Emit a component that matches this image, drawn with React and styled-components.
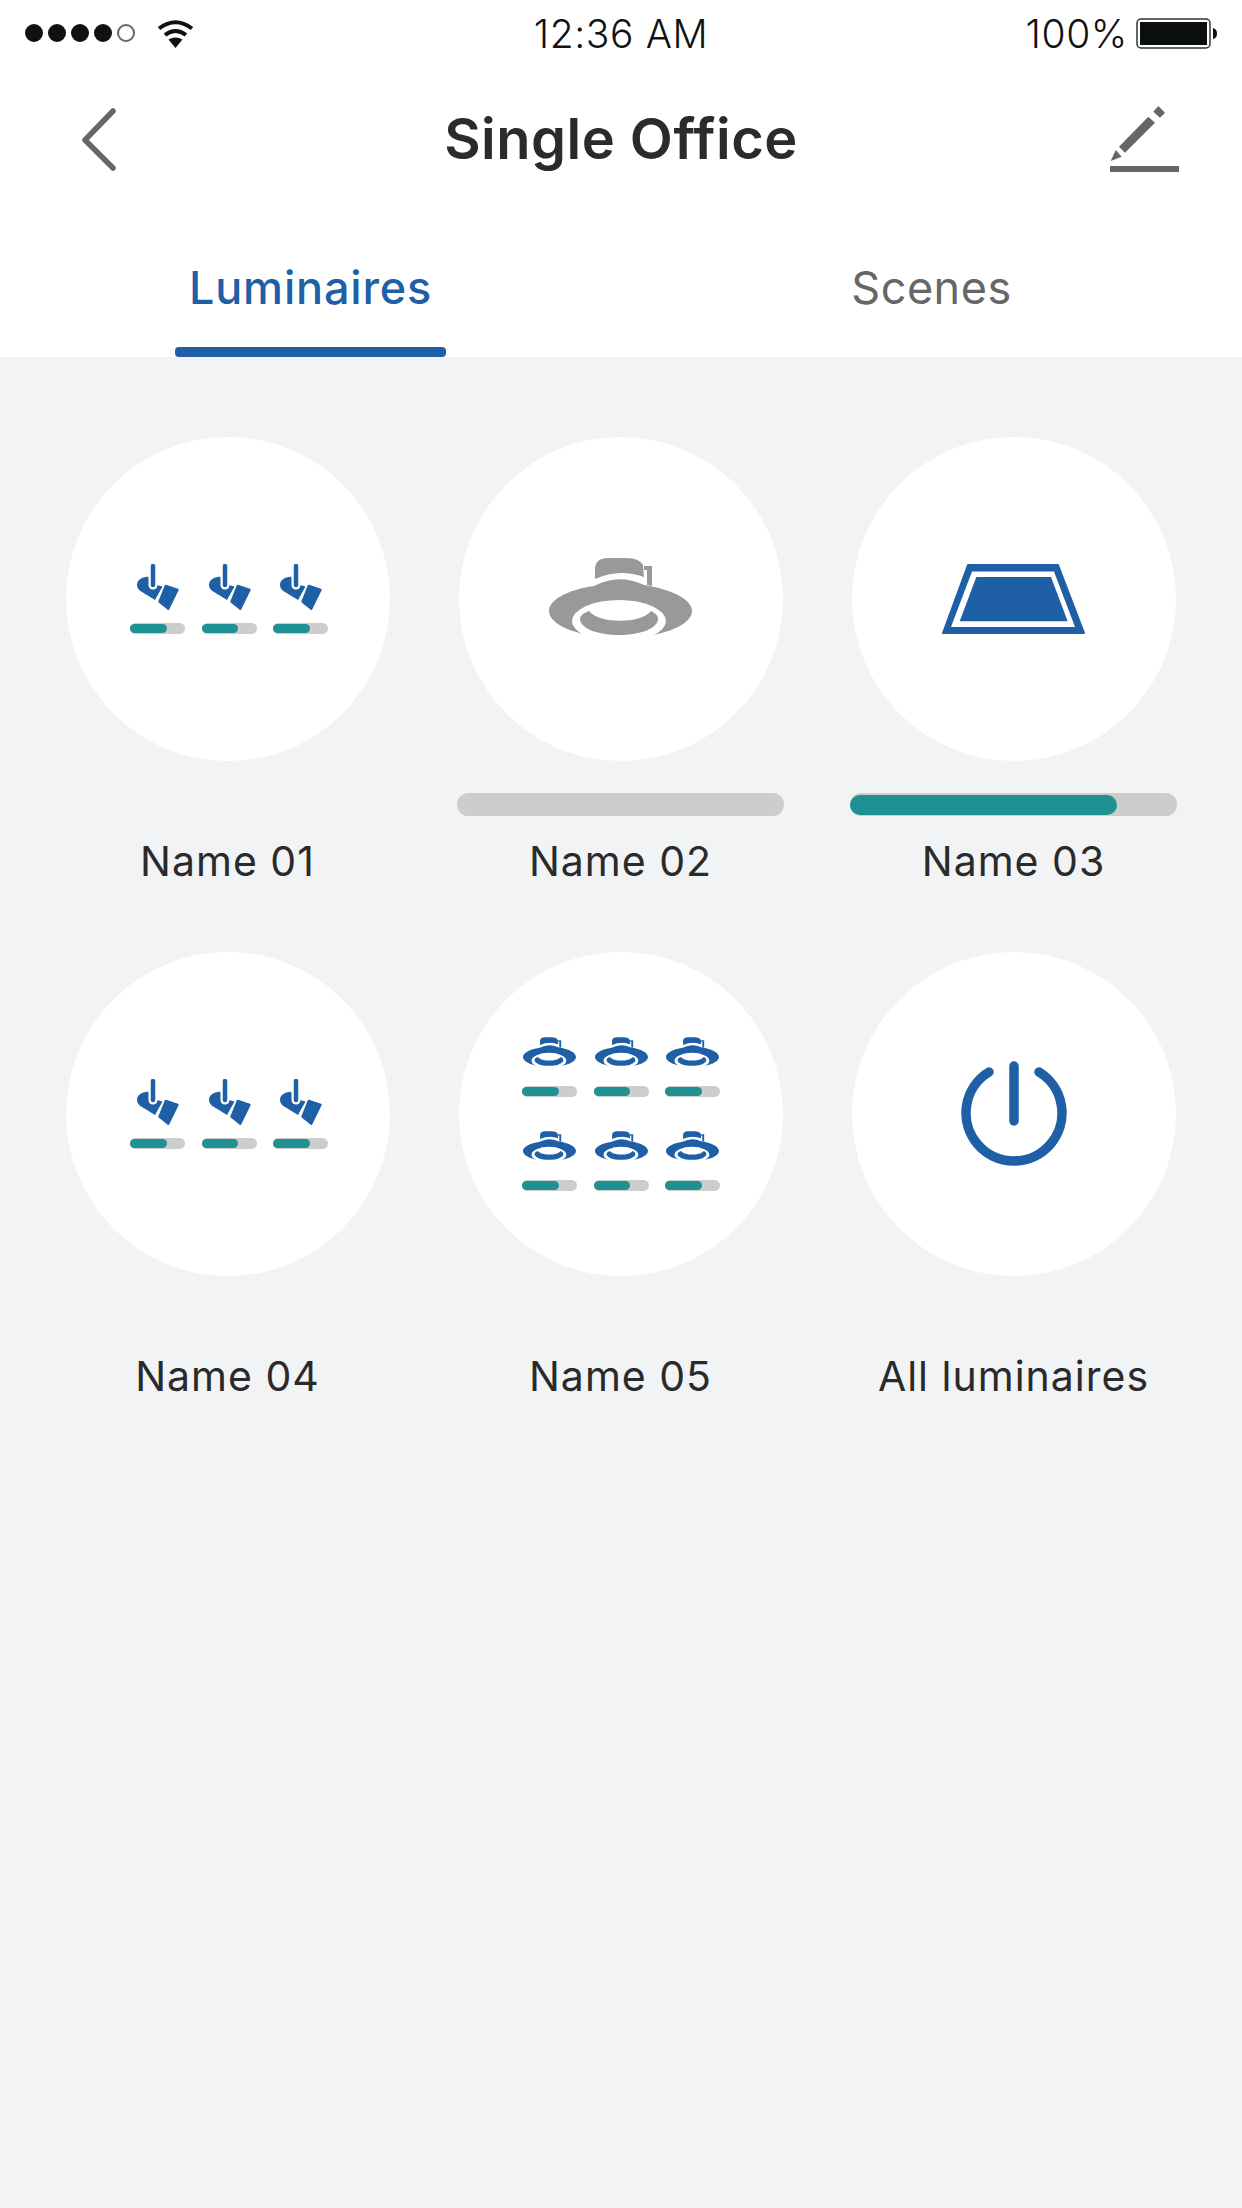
import React from 'react';
import styled, {createGlobalStyle} from 'styled-components';

const GlobalStyle = createGlobalStyle`
  html, body {
    margin: 0;
    padding: 0;
    background-color: #f2f3f5;
  }
`;

const BLUE = '#1f5fa6';
const TEAL = '#209193';
const GREY = '#cdcdcd';
const FONT = `Inter, Roboto, "Liberation Sans", sans-serif`;

const Page = styled.div`
  width: 1242px;
  min-height: 2208px;
  background-color: #f2f3f5;
  font-family: ${FONT};
`;

const Header = styled.header`
  background-color: #fff;
`;

const StatusBar = styled.div`
  height: 66px;
  padding: 0 25px;
  box-sizing: border-box;
  display: grid;
  grid-template-columns: 1fr auto 1fr;
  align-items: center;
  color: #111;
`;

const StatusLeft = styled.div`
  display: flex;
  align-items: center;
`;

const StatusRight = styled.div`
  display: flex;
  align-items: center;
  justify-content: flex-end;
  gap: 8px;
`;

const Dots = styled.div`
  display: flex;
  gap: 5px;
  margin-right: 22px;
`;

const Dot = styled.span`
  width: 18px;
  height: 18px;
  box-sizing: border-box;
  border-radius: 50%;
  background-color: ${p => (p.$on ? '#111' : 'transparent')};
  border: 2px solid ${p => (p.$on ? '#111' : '#666')};
`;

const StatusText = styled.span`
  font-size: 39px;
  line-height: 44px;
  font-weight: 300;
  letter-spacing: 0.6px;
  padding-top: 2px;
`;

const Nav = styled.div`
  height: 146px;
  padding: 0 63px;
  display: grid;
  grid-template-columns: 1fr auto 1fr;
  align-items: center;
`;

const Title = styled.h1`
  margin: 0;
  font-size: 56px;
  line-height: 64px;
  font-weight: 600;
  letter-spacing: 0.5px;
  color: #2b2b2b;
`;

const BackIcon = styled.svg`
  margin-left: 19px;
`;

const EditIcon = styled.svg`
  justify-self: end;
`;

const Tabs = styled.div`
  height: 145px;
  display: grid;
  grid-template-columns: 1fr 1fr;
`;

const Tab = styled.div`
  display: flex;
  flex-direction: column;
  align-items: center;
  justify-content: flex-end;
  color: ${p => (p.$active ? BLUE : '#666')};
  font-weight: ${p => (p.$active ? 500 : 400)};
`;

const TabLabel = styled.span`
  font-size: 45px;
  line-height: 50px;
  letter-spacing: ${p => (p.$active ? '0.8px' : '0.5px')};
  margin-bottom: 34px;
`;

const TabLine = styled.span`
  width: 271px;
  height: 10px;
  border-radius: 4px;
  background-color: ${p => (p.$active ? BLUE : 'transparent')};
`;

const Grid = styled.main`
  padding: 80px 32px 0 31px;
  display: grid;
  grid-template-columns: repeat(3, 393px);
  row-gap: 71px;
`;

const Cell = styled.div`
  display: flex;
  flex-direction: column;
  align-items: center;
`;

const Circle = styled.div`
  width: 324px;
  height: 324px;
  border-radius: 50%;
  background-color: #fff;
  display: flex;
  align-items: center;
  justify-content: center;
`;

const BarSlot = styled.div`
  height: 23px;
  width: 327px;
  margin-top: 32px;
`;

const Track = styled.div`
  height: ${p => (p.$small ? '11px' : '23px')};
  width: ${p => (p.$small ? '55px' : '327px')};
  border-radius: 12px;
  background-color: ${GREY};
  display: flex;
  align-items: center;
`;

const Fill = styled.div`
  height: ${p => (p.$small ? '9px' : '20px')};
  border-radius: 10px;
  background-color: ${TEAL};
`;

const Name = styled.div`
  margin-top: 25px;
  font-size: 41px;
  line-height: 40px;
  letter-spacing: 1px;
  color: #2a2a2a;
`;

const IconRow = styled.div`
  display: grid;
  grid-template-columns: repeat(3, 55px);
  column-gap: 16.5px;
  padding-left: ${p => p.$nudge}px;
`;

const IconStack = styled.div`
  display: flex;
  flex-direction: column;
  gap: 34px;
`;

const Unit = styled.div`
  display: flex;
  flex-direction: column;
  align-items: center;
  gap: ${p => p.$gap}px;
`;

const DownlightSvg = styled.svg`
  display: block;
  width: ${p => (p.$small ? '53px' : '143px')};
  height: ${p => (p.$small ? '31px' : '82px')};
  color: ${p => (p.$small ? BLUE : '#999')};
`;

const Bar = ({level, small}) => (
  <Track $small={small}>
    <Fill $small={small} style={{width: `${level}%`}} />
  </Track>
);

const Downlight = ({small}) => (
  <DownlightSvg $small={small} viewBox="0 0 143 82">
    <path fill="currentColor" d="M46 21 L46 11 Q46 0 60 0 L78 0 Q90 0 94 7 L95 19 Q70 10 46 21 Z" />
    <path fill="currentColor" d="M95 8 L103 8 L103 28 L98 27 L98 12 L95 12 Z" />
    <path fill="currentColor" d="M45 28 Q70 15 95 27 C125 32 143 42 143 53 C143 68 110 80 71.5 80 C33 80 0 68 0 53 C0 42 18 32 45 28 Z" />
    <ellipse fill="#fff" cx="70" cy="63" rx="47" ry="21" />
    <path fill="currentColor" d="M40 53 C50 66 92 66 102 53 Q109 56 109 61 C109 70 92 77 70 77 C48 77 31 70 31 61 Q31 56 40 53 Z" />
  </DownlightSvg>
);

const Spot = () => (
  <svg width="55" height="48" viewBox="0 0 55 48" style={{display: 'block'}}>
    <path fill={BLUE} d="M20 12.5 C12 12.5 7 16 7 21 C7 24 9 26.5 12 28 L25 36 L32.5 22.5 L27 21 L18 13 Z" />
    <path fill={BLUE} d="M35.7 21.7 L47.7 25.7 L38.3 45 L29.3 37.7 Z" stroke={BLUE} strokeWidth="2" strokeLinejoin="round" />
    <path stroke="#fff" strokeWidth="9" strokeLinecap="round" d="M23 8 L23 21" />
    <path stroke={BLUE} strokeWidth="4.5" strokeLinecap="round" d="M23 2 L23 21" />
  </svg>
);

const Panel = () => (
  <svg width="143" height="70" viewBox="0 0 143 70" style={{display: 'block'}}>
    <path fill={BLUE} stroke={BLUE} strokeWidth="2" strokeLinejoin="round" d="M26 1 L116 1 L142 69 L1 69 Z" />
    <path fill="#fff" d="M30 7.5 L112 7.5 L133 63 L9 63 Z" />
    <path fill={BLUE} d="M34.3 13 L109 13 L125.7 57.3 L17.7 57.3 Z" />
  </svg>
);

const Power = () => (
  <svg width="106" height="106" viewBox="0 0 106 106" style={{display: 'block'}}>
    <path fill="none" stroke={BLUE} strokeWidth="9.5" strokeLinecap="round" d="M28 11 A48 48 0 1 0 78 11" />
    <path fill="none" stroke={BLUE} strokeWidth="9.5" strokeLinecap="round" d="M53 5 L53 60" />
  </svg>
);

const SpotGroup = () => (
  <IconRow $nudge={3}>
    {[0, 1, 2].map(i => (
      <Unit key={i} $gap={11}>
        <Spot />
        <Bar small level={67} />
      </Unit>
    ))}
  </IconRow>
);

const DownlightGroup = () => (
  <IconStack>
    {[0, 1].map(row => (
      <IconRow key={row} $nudge={1}>
        {[0, 1, 2].map(i => (
          <Unit key={i} $gap={18}>
            <Downlight small />
            <Bar small level={67} />
          </Unit>
        ))}
      </IconRow>
    ))}
  </IconStack>
);

const ITEMS = [
  {name: 'Name 01', icon: <SpotGroup />},
  {name: 'Name 02', icon: <Downlight />, level: 0},
  {name: 'Name 03', icon: <Panel />, level: 81.5},
  {name: 'Name 04', icon: <SpotGroup />},
  {name: 'Name 05', icon: <DownlightGroup />},
  {name: 'All luminaires', icon: <Power />},
];

const App = () => {
  return (
    <Page>
      <GlobalStyle />
      <Header>
        <StatusBar>
          <StatusLeft>
            <Dots>
              <Dot $on />
              <Dot $on />
              <Dot $on />
              <Dot $on />
              <Dot />
            </Dots>
            <svg width="37" height="29" viewBox="0 0 37 29" fill="none" stroke="#111" strokeWidth="4">
              <path d="M2 9.5 Q18.5 -3 35 9.5" />
              <path d="M8 16 Q18.5 8 29 16" />
              <path fill="#111" stroke="none" d="M11.5 20.5 Q18.5 16.5 25.5 20.5 L18.5 29 Z" />
            </svg>
          </StatusLeft>
          <StatusText>12:36 AM</StatusText>
          <StatusRight>
            <StatusText>100%</StatusText>
            <svg width="81" height="31" viewBox="0 0 81 31">
              <rect x="1" y="1" width="73" height="29" rx="4" fill="#fff" stroke="#333" strokeWidth="1.5" />
              <rect x="4" y="4" width="67" height="23" fill="#0c0f0f" />
              <path fill="#111" d="M77 10 Q81 11 81 15.5 Q81 20 77 21 Z" />
            </svg>
          </StatusRight>
        </StatusBar>
        <Nav>
          <BackIcon width="34" height="63" viewBox="0 0 34 63" fill="none" stroke="#666" strokeWidth="5.5" strokeLinecap="round" strokeLinejoin="round">
            <path d="M31 3 L3 32 L31 60" />
          </BackIcon>
          <Title>Single Office</Title>
          <EditIcon width="69" height="66" viewBox="0 0 69 66" fill="#666">
            <path d="M38.3 10.7 L45 16.7 L15 46.7 L9 40.7 Z" />
            <path d="M48.3 0 L55 6.7 L50 11.7 L43.3 5.7 Z" />
            <path d="M5.7 44 L11.7 50.7 L0.7 55 Z" />
            <rect x="0" y="60" width="69" height="6" />
          </EditIcon>
        </Nav>
        <Tabs>
          <Tab $active>
            <TabLabel $active>Luminaires</TabLabel>
            <TabLine $active />
          </Tab>
          <Tab>
            <TabLabel>Scenes</TabLabel>
            <TabLine />
          </Tab>
        </Tabs>
      </Header>
      <Grid>
        {ITEMS.map(item => (
          <Cell key={item.name}>
            <Circle>{item.icon}</Circle>
            <BarSlot>
              {item.level !== undefined && <Bar level={item.level} />}
            </BarSlot>
            <Name>{item.name}</Name>
          </Cell>
        ))}
      </Grid>
    </Page>
  );
};

export default App;
